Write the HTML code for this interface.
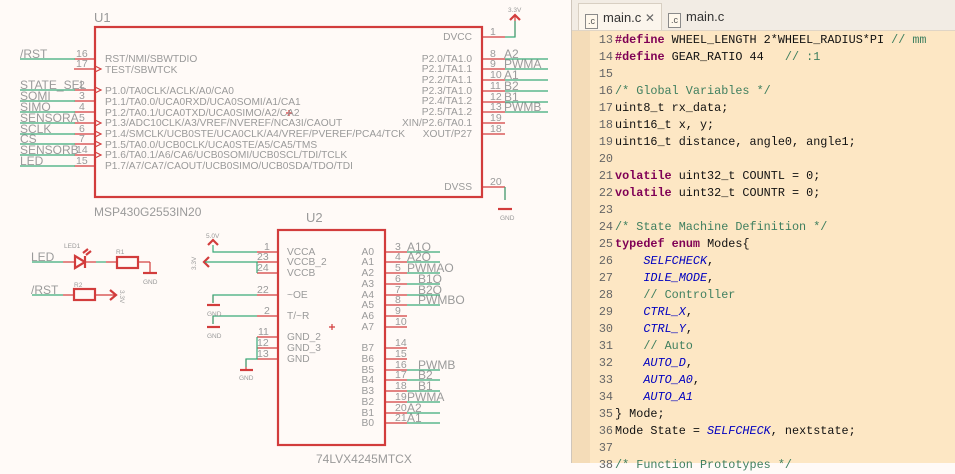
<!DOCTYPE html>
<html><head><meta charset="utf-8">
<style>
html,body{margin:0;padding:0;width:955px;height:463px;overflow:hidden;background:#fffaf7;}
#sch{position:absolute;left:0;top:0;}
#ed{position:absolute;left:571px;top:0;width:384px;height:463px;background:#fde7c4;border-left:1px solid #cfc6bb;}
#tabs{position:absolute;left:0;top:0;width:384px;height:30px;background:#f2ece4;border-bottom:1px solid #e0d5c6;}
.tab{position:absolute;top:3px;height:27px;font:13px "Liberation Sans",sans-serif;line-height:27px;color:#333;}
.ic{display:inline-block;width:11px;height:13px;border:1px solid #8a8a8a;background:#fff8ec;font:9px "Liberation Sans";line-height:13px;text-align:center;color:#555;vertical-align:-2px;margin-right:5px;}
#gut{position:absolute;left:0;top:31px;width:18px;height:432px;background:#f4dcb8;}
#code{position:absolute;left:0;top:32px;font:11.8px "Liberation Mono",monospace;line-height:17px;white-space:pre;color:#111;}
.n{display:inline-block;width:41px;text-align:right;color:#666;padding-right:2px;}
.k{color:#7f0055;font-weight:bold}
.c{color:#3f7f5f}
.e{color:#0000c0;font-style:italic}
</style></head><body>
<svg id="sch" width="560" height="463" font-family="Liberation Sans,sans-serif" font-size="9.5" fill="#9a9a9a">
<g stroke="#d23c3c" fill="none" stroke-width="2.2">
<rect x="95" y="27" width="387" height="170"/>
<rect x="278" y="230" width="107" height="215"/>
<rect x="117" y="257" width="21" height="11"/>
<rect x="74" y="289" width="21" height="11"/>
</g>
<g stroke="#d23c3c" stroke-width="1.2">
<line x1="74" y1="59" x2="95" y2="59"/><line x1="74" y1="69" x2="95" y2="69"/>
<line x1="74" y1="90" x2="95" y2="90"/><line x1="74" y1="101" x2="95" y2="101"/>
<line x1="74" y1="112" x2="95" y2="112"/><line x1="74" y1="123" x2="95" y2="123"/>
<line x1="74" y1="134" x2="95" y2="134"/><line x1="74" y1="144" x2="95" y2="144"/>
<line x1="74" y1="155" x2="95" y2="155"/><line x1="74" y1="166" x2="95" y2="166"/>
<line x1="482" y1="37" x2="505" y2="37"/>
<line x1="482" y1="59" x2="505" y2="59"/><line x1="482" y1="69" x2="505" y2="69"/>
<line x1="482" y1="80" x2="505" y2="80"/><line x1="482" y1="91" x2="505" y2="91"/>
<line x1="482" y1="102" x2="505" y2="102"/><line x1="482" y1="112" x2="505" y2="112"/>
<line x1="482" y1="123" x2="505" y2="123"/><line x1="482" y1="134" x2="505" y2="134"/>
<line x1="482" y1="187" x2="505" y2="187"/>
<line x1="257" y1="252" x2="278" y2="252"/><line x1="257" y1="262" x2="278" y2="262"/>
<line x1="257" y1="273" x2="278" y2="273"/><line x1="257" y1="295" x2="278" y2="295"/>
<line x1="257" y1="316" x2="278" y2="316"/><line x1="257" y1="337" x2="278" y2="337"/>
<line x1="257" y1="348" x2="278" y2="348"/><line x1="257" y1="359" x2="278" y2="359"/>
<line x1="385" y1="252" x2="407" y2="252"/><line x1="385" y1="262" x2="407" y2="262"/>
<line x1="385" y1="273" x2="407" y2="273"/><line x1="385" y1="284" x2="407" y2="284"/>
<line x1="385" y1="295" x2="407" y2="295"/><line x1="385" y1="305" x2="407" y2="305"/>
<line x1="385" y1="316" x2="407" y2="316"/><line x1="385" y1="327" x2="407" y2="327"/>
<line x1="385" y1="348" x2="407" y2="348"/><line x1="385" y1="359" x2="407" y2="359"/>
<line x1="385" y1="370" x2="407" y2="370"/><line x1="385" y1="380" x2="407" y2="380"/>
<line x1="385" y1="391" x2="407" y2="391"/><line x1="385" y1="402" x2="407" y2="402"/>
<line x1="385" y1="413" x2="407" y2="413"/><line x1="385" y1="423" x2="407" y2="423"/>
<line x1="63" y1="262" x2="75" y2="262"/><line x1="85" y1="262" x2="96" y2="262"/>
<line x1="106" y1="262" x2="117" y2="262"/><line x1="138" y1="262" x2="150" y2="262"/><line x1="150" y1="262" x2="150" y2="273"/>
<line x1="63" y1="295" x2="74" y2="295"/><line x1="95" y1="295" x2="116" y2="295"/>
<line x1="505" y1="187" x2="505" y2="200"/><line x1="246" y1="359" x2="246" y2="370"/>
<line x1="213" y1="295" x2="213" y2="303"/><line x1="213" y1="316" x2="213" y2="324"/>
<line x1="515" y1="37" x2="515" y2="16"/>
<path d="M95 66l6 3-6 3M95 87l6 3-6 3M95 120l6 3-6 3M95 131l6 3-6 3M95 141l6 3-6 3M95 152l6 3-6 3" fill="none"/>
<path d="M289 110v6M286 113h6M332 324v6M329 327h6"/>
</g>
<g stroke="#d23c3c" stroke-width="2.2" fill="none">
<line x1="498" y1="209" x2="512" y2="209"/>
<line x1="143" y1="273" x2="157" y2="273"/>
<line x1="207" y1="305" x2="220" y2="305"/><line x1="207" y1="327" x2="220" y2="327"/>
<line x1="240" y1="370" x2="253" y2="370"/>
<path d="M510 20l5-5 5 5"/>
<path d="M208 245l5-5 5 5"/>
<path d="M209 257l-5 5 5 5"/>
<path d="M110 290l6 5-6 5"/>
<path d="M75 256v12l10-6z M85 256v12"/>
<path d="M83 253l5-4M86 255l5-4"/>
</g>
<g stroke="#3aaa7a" stroke-width="1.2" fill="none">
<line x1="20" y1="59" x2="75" y2="59"/>
<line x1="20" y1="90" x2="75" y2="90"/><line x1="20" y1="101" x2="75" y2="101"/>
<line x1="20" y1="112" x2="75" y2="112"/><line x1="20" y1="123" x2="75" y2="123"/>
<line x1="20" y1="134" x2="75" y2="134"/><line x1="20" y1="144" x2="75" y2="144"/>
<line x1="20" y1="155" x2="75" y2="155"/><line x1="20" y1="166" x2="75" y2="166"/>
<path d="M505 37h10v-16"/>
<line x1="505" y1="59" x2="548" y2="59"/><line x1="505" y1="69" x2="548" y2="69"/>
<line x1="505" y1="80" x2="548" y2="80"/><line x1="505" y1="91" x2="548" y2="91"/>
<line x1="505" y1="102" x2="548" y2="102"/><line x1="505" y1="112" x2="548" y2="112"/>
<line x1="505" y1="187" x2="505" y2="200"/>
<path d="M213 245v7h44M205 262h52v11M257 295h-44v8M257 316h-44v8M257 337v22h-11v8"/>
<line x1="407" y1="252" x2="440" y2="252"/><line x1="407" y1="262" x2="440" y2="262"/>
<line x1="407" y1="273" x2="440" y2="273"/><line x1="407" y1="284" x2="440" y2="284"/>
<line x1="407" y1="295" x2="440" y2="295"/><line x1="407" y1="305" x2="440" y2="305"/>
<line x1="407" y1="370" x2="440" y2="370"/><line x1="407" y1="380" x2="440" y2="380"/>
<line x1="407" y1="391" x2="440" y2="391"/><line x1="407" y1="402" x2="440" y2="402"/>
<line x1="407" y1="413" x2="440" y2="413"/><line x1="407" y1="423" x2="440" y2="423"/>
<line x1="32" y1="262" x2="63" y2="262"/><line x1="96" y1="262" x2="106" y2="262"/>
<line x1="32" y1="295" x2="63" y2="295"/>
</g>
<g font-size="12">
<text x="94" y="22" font-size="13">U1</text>
<text x="94" y="216">MSP430G2553IN20</text>
<text x="306" y="222" font-size="13">U2</text>
<text x="316" y="463">74LVX4245MTCX</text>
<text x="20" y="58">/RST</text><text x="20" y="89">STATE_SEL</text><text x="20" y="100">SOMI</text>
<text x="20" y="111">SIMO</text><text x="20" y="122">SENSORA</text><text x="20" y="133">SCLK</text>
<text x="20" y="143">CS</text><text x="20" y="154">SENSORB</text><text x="20" y="165">LED</text>
<text x="504" y="58">A2</text><text x="504" y="68">PWMA</text><text x="504" y="79">A1</text>
<text x="504" y="90">B2</text><text x="504" y="101">B1</text><text x="504" y="111">PWMB</text>
<text x="31" y="261">LED</text><text x="31" y="294">/RST</text>
<text x="407" y="251">A1O</text><text x="407" y="261">A2O</text><text x="407" y="272">PWMAO</text>
<text x="418" y="283">B1O</text><text x="418" y="294">B2O</text><text x="418" y="304">PWMBO</text>
<text x="418" y="369">PWMB</text><text x="418" y="379">B2</text><text x="418" y="390">B1</text>
<text x="407" y="401">PWMA</text><text x="407" y="412">A2</text><text x="407" y="422">A1</text>
</g>
<g font-size="10.5">
<text x="76" y="57">16</text><text x="76" y="67">17</text><text x="79" y="88">2</text><text x="79" y="99">3</text>
<text x="79" y="110">4</text><text x="79" y="121">5</text><text x="79" y="132">6</text><text x="79" y="142">7</text>
<text x="76" y="153">14</text><text x="76" y="164">15</text>
<text x="490" y="35">1</text><text x="490" y="57">8</text><text x="490" y="67">9</text><text x="490" y="78">10</text>
<text x="490" y="89">11</text><text x="490" y="100">12</text><text x="490" y="110">13</text><text x="490" y="121">19</text>
<text x="490" y="132">18</text><text x="490" y="185">20</text>
<text x="264" y="250">1</text><text x="257" y="260">23</text><text x="257" y="271">24</text><text x="257" y="293">22</text>
<text x="264" y="314">2</text><text x="258" y="335">11</text><text x="257" y="346">12</text><text x="257" y="357">13</text>
<text x="395" y="250">3</text><text x="395" y="260">4</text><text x="395" y="271">5</text><text x="395" y="282">6</text>
<text x="395" y="293">7</text><text x="395" y="303">8</text><text x="395" y="314">9</text><text x="395" y="325">10</text>
<text x="395" y="346">14</text><text x="395" y="357">15</text><text x="395" y="368">16</text><text x="395" y="378">17</text>
<text x="395" y="389">18</text><text x="395" y="400">19</text><text x="395" y="411">20</text><text x="395" y="421">21</text>
</g>
<g font-size="10.2">
<text x="105" y="62">RST/NMI/SBWTDIO</text><text x="105" y="73">TEST/SBWTCK</text>
<text x="105" y="94">P1.0/TA0CLK/ACLK/A0/CA0</text><text x="105" y="105">P1.1/TA0.0/UCA0RXD/UCA0SOMI/A1/CA1</text>
<text x="105" y="116">P1.2/TA0.1/UCA0TXD/UCA0SIMO/A2/CA2</text><text x="105" y="126">P1.3/ADC10CLK/A3/VREF/NVEREF/NCA3I/CAOUT</text>
<text x="105" y="137">P1.4/SMCLK/UCB0STE/UCA0CLK/A4/VREF/PVEREF/PCA4/TCK</text><text x="105" y="148">P1.5/TA0.0/UCB0CLK/UCA0STE/A5/CA5/TMS</text>
<text x="105" y="158">P1.6/TA0.1/A6/CA6/UCB0SOMI/UCB0SCL/TDI/TCLK</text><text x="105" y="169">P1.7/A7/CA7/CAOUT/UCB0SIMO/UCB0SDA/TDO/TDI</text>
<g text-anchor="end">
<text x="472" y="40">DVCC</text><text x="472" y="62">P2.0/TA1.0</text><text x="472" y="72">P2.1/TA1.1</text>
<text x="472" y="83">P2.2/TA1.1</text><text x="472" y="94">P2.3/TA1.0</text><text x="472" y="104">P2.4/TA1.2</text>
<text x="472" y="115">P2.5/TA1.2</text><text x="472" y="126">XIN/P2.6/TA0.1</text><text x="472" y="137">XOUT/P27</text>
<text x="472" y="190">DVSS</text>
<text x="374" y="255">A0</text><text x="374" y="265">A1</text><text x="374" y="276">A2</text><text x="374" y="287">A3</text>
<text x="374" y="298">A4</text><text x="374" y="308">A5</text><text x="374" y="319">A6</text><text x="374" y="330">A7</text>
<text x="374" y="351">B7</text><text x="374" y="362">B6</text><text x="374" y="373">B5</text><text x="374" y="383">B4</text>
<text x="374" y="394">B3</text><text x="374" y="405">B2</text><text x="374" y="416">B1</text><text x="374" y="426">B0</text>
</g>
<text x="287" y="255">VCCA</text><text x="287" y="265">VCCB_2</text><text x="287" y="276">VCCB</text>
<text x="287" y="298">~OE</text><text x="287" y="319">T/~R</text>
<text x="287" y="340">GND_2</text><text x="287" y="351">GND_3</text><text x="287" y="362">GND</text>
</g>
<g font-size="6.5">
<text x="508" y="12">3.3V</text><text x="500" y="220">GND</text><text x="143" y="284">GND</text>
<text x="206" y="238">5.0V</text><text x="207" y="316">GND</text><text x="207" y="338">GND</text><text x="239" y="380">GND</text>
<text x="64" y="248">LED1</text><text x="116" y="254">R1</text><text x="74" y="287">R2</text>
<text transform="translate(196,270) rotate(-90)">3.3V</text>
<text transform="translate(120,290) rotate(90)">3.3V</text>
</g>
</svg>
<div id="ed">
<div id="tabs">
<div class="tab" style="left:6px;width:84px;background:#fbf5ec;border:1px solid #d8cfc2;border-bottom:none;padding-left:6px;box-sizing:border-box;"><span class="ic">.c</span>main.c <span style="color:#666;font-size:12px">✕</span></div>
<div class="tab" style="left:96px;"><span class="ic">.c</span>main.c</div>
</div>
<div id="gut"></div>
<div id="code"><span class="n">13</span><span class="k">#define</span> WHEEL_LENGTH 2*WHEEL_RADIUS*PI <span class="c">// mm</span>
<span class="n">14</span><span class="k">#define</span> GEAR_RATIO 44   <span class="c">// :1</span>
<span class="n">15</span>
<span class="n">16</span><span class="c">/* Global Variables */</span>
<span class="n">17</span>uint8_t rx_data;
<span class="n">18</span>uint16_t x, y;
<span class="n">19</span>uint16_t distance, angle0, angle1;
<span class="n">20</span>
<span class="n">21</span><span class="k">volatile</span> uint32_t COUNTL = 0;
<span class="n">22</span><span class="k">volatile</span> uint32_t COUNTR = 0;
<span class="n">23</span>
<span class="n">24</span><span class="c">/* State Machine Definition */</span>
<span class="n">25</span><span class="k">typedef</span> <span class="k">enum</span> Modes{
<span class="n">26</span>    <span class="e">SELFCHECK</span>,
<span class="n">27</span>    <span class="e">IDLE_MODE</span>,
<span class="n">28</span>    <span class="c">// Controller</span>
<span class="n">29</span>    <span class="e">CTRL_X</span>,
<span class="n">30</span>    <span class="e">CTRL_Y</span>,
<span class="n">31</span>    <span class="c">// Auto</span>
<span class="n">32</span>    <span class="e">AUTO_D</span>,
<span class="n">33</span>    <span class="e">AUTO_A0</span>,
<span class="n">34</span>    <span class="e">AUTO_A1</span>
<span class="n">35</span>} Mode;
<span class="n">36</span>Mode State = <span class="e">SELFCHECK</span>, nextstate;
<span class="n">37</span>
<span class="n">38</span><span class="c">/* Function Prototypes */</span></div>
</div>
</body></html>
